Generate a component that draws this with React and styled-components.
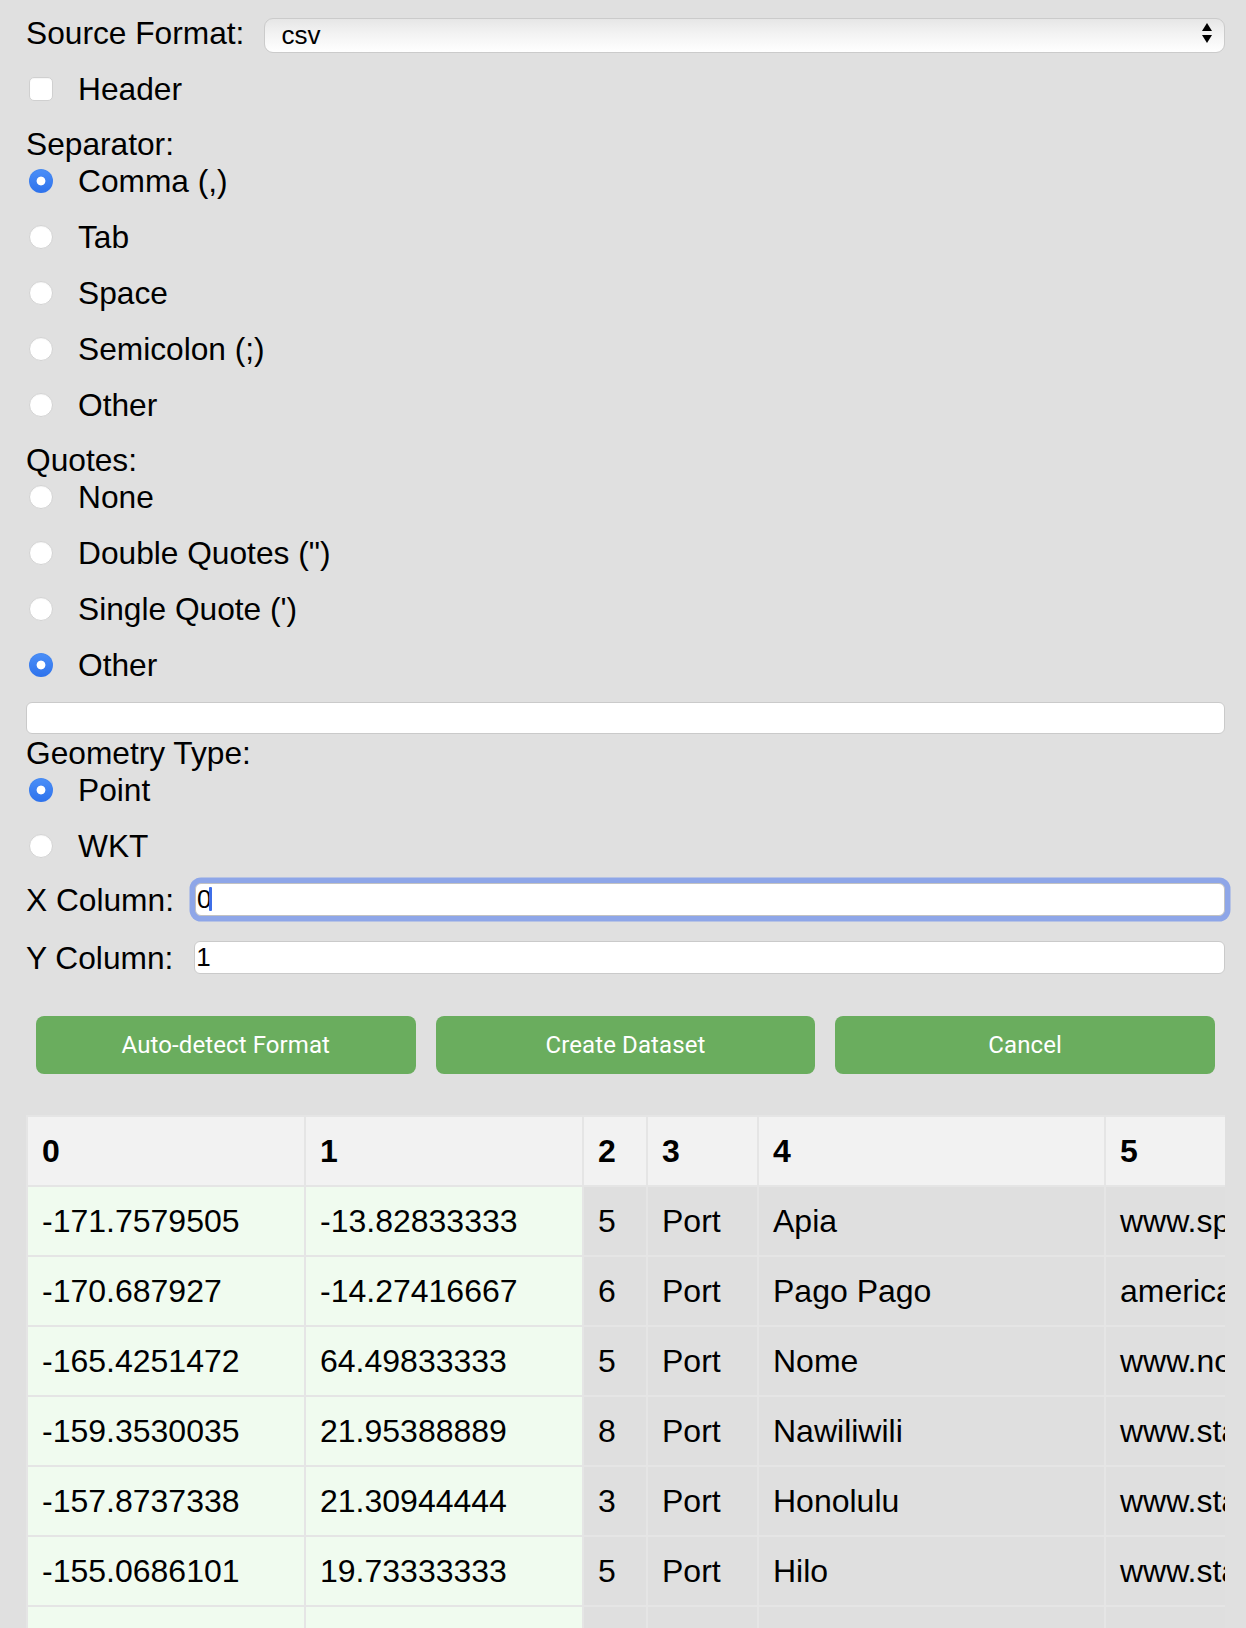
import React from 'react';
import styled, { createGlobalStyle } from 'styled-components';

const Global = createGlobalStyle`
  html, body { margin: 0; padding: 0; background: #e0e0e0; overflow: hidden; }
  body { font-family: "Liberation Sans", Arial, Helvetica, sans-serif; color: #000; }
`;

const Page = styled.div`
  padding: 0 21px 0 26px;
  font-size: 31.7px;
  line-height: 36px;
`;

const FormatRow = styled.div`
  display: flex;
  align-items: center;
  padding-top: 15px;
  height: 35px;
  margin-bottom: 20px;
`;

const FieldLabel = styled.span`
  flex: none;
  margin-right: ${p => p.$gap || 21}px;
  white-space: nowrap;
`;

const SelectWrap = styled.div`
  position: relative;
  flex: 1;
  height: 35px;
`;

const Select = styled.select`
  appearance: none;
  -webkit-appearance: none;
  width: 100%;
  height: 35px;
  box-sizing: border-box;
  border: 1.5px solid #cbcbcb;
  border-radius: 9px;
  background: linear-gradient(to bottom, #e6e6e6 0%, #f3f3f3 45%, #ffffff 100%);
  font-family: "Liberation Sans", Arial, sans-serif;
  font-size: 26px;
  color: #000;
  padding: 0 0 0 16px;
  outline: none;
`;

const SelectArrows = styled.svg`
  position: absolute;
  right: 13px;
  top: 8px;
  width: 10px;
  height: 20px;
  pointer-events: none;
`;

const OptionRow = styled.label`
  display: flex;
  align-items: center;
  height: 38px;
  margin-bottom: 18px;
  white-space: nowrap;
`;

const GroupLabel = styled.div`
  height: 36px;
  line-height: 36px;
  margin-top: ${p => p.$top || 0}px;
`;

const CheckBox = styled.input.attrs({ type: 'checkbox' })`
  appearance: none;
  -webkit-appearance: none;
  flex: none;
  width: 24px;
  height: 24px;
  margin: 0 25px 0 3px;
  box-sizing: border-box;
  background: #fff;
  border: 1px solid #d0d0d0;
  border-radius: 5px;
  box-shadow: inset 0 1px 1px rgba(0, 0, 0, 0.04);
`;

const Radio = styled.input.attrs({ type: 'radio' })`
  appearance: none;
  -webkit-appearance: none;
  flex: none;
  width: 24px;
  height: 24px;
  margin: 0 25px 0 3px;
  box-sizing: border-box;
  border-radius: 50%;
  background: #fff;
  border: 1px solid #d3d3d3;
  box-shadow: inset 0 1px 1px rgba(0, 0, 0, 0.04);
  &:checked {
    border: none;
    background:
      radial-gradient(circle at center, #fff 0, #fff 4px, rgba(255,255,255,0) 4.8px),
      linear-gradient(to bottom, #4b8ff8, #2e72ec);
  }
`;

const TextField = styled.input.attrs({ type: 'text' })`
  display: block;
  box-sizing: border-box;
  width: 100%;
  height: ${p => p.$h || 32}px;
  margin: 0;
  padding: 0 0 0 1px;
  background: #fff;
  border: 1.5px solid ${p => (p.$focused ? '#c2c2c2' : '#cacaca')};
  border-radius: 6px;
  font-family: "Liberation Sans", Arial, sans-serif;
  font-size: 26px;
  color: #000;
  outline: none;
  box-shadow: ${p => (p.$focused ? '0 0 0 5.5px #8ea6e8' : 'none')};
`;

const OtherField = styled.div`
  margin-top: 3px;
`;

const ColumnRow = styled.div`
  display: flex;
  align-items: center;
  height: 33px;
  margin-top: ${p => p.$top || 0}px;
`;

const InputWrap = styled.div`
  position: relative;
  flex: 1;
`;

const Caret = styled.span`
  position: absolute;
  left: 14px;
  top: 4px;
  width: 3px;
  height: 24px;
  background: #3d6ee8;
  border-radius: 1px;
`;

const ButtonRow = styled.div`
  display: flex;
  margin-top: 42px;
`;

const Button = styled.button`
  flex: 1;
  height: 58px;
  margin: 0 10px;
  border: none;
  border-radius: 8px;
  background: #6aad5e;
  color: #fff;
  font-family: Roboto, "Liberation Sans", sans-serif;
  font-size: 24px;
  font-weight: 400;
  letter-spacing: 0.1px;
  cursor: pointer;
`;

const TableWrap = styled.div`
  margin-top: 41px;
  overflow: hidden;
`;

const Table = styled.table`
  table-layout: fixed;
  width: 1480px;
  border-collapse: separate;
  border-spacing: 2px;
  background: #e5e5e5;
  font-size: 32px;
`;

const Col = styled.col`
  width: ${p => p.$w}px;
`;

const Th = styled.th`
  height: 68px;
  padding: 0 14px;
  background: #f2f2f2;
  text-align: left;
  font-weight: bold;
  white-space: nowrap;
  overflow: hidden;
`;

const Td = styled.td`
  height: 68px;
  padding: 0 14px;
  background: ${p => (p.$geo ? '#f0fbef' : '#dfdfdf')};
  white-space: nowrap;
  overflow: hidden;
`;

const columns = [276, 276, 62, 109, 345, 400];

const rows = [
  ['-171.7579505', '-13.82833333', '5', 'Port', 'Apia', 'www.spasifik.ws'],
  ['-170.687927', '-14.27416667', '6', 'Port', 'Pago Pago', 'americansamoa.gov'],
  ['-165.4251472', '64.49833333', '5', 'Port', 'Nome', 'www.nomealaska.org'],
  ['-159.3530035', '21.95388889', '8', 'Port', 'Nawiliwili', 'www.state.hi.us'],
  ['-157.8737338', '21.30944444', '3', 'Port', 'Honolulu', 'www.state.hi.us'],
  ['-155.0686101', '19.73333333', '5', 'Port', 'Hilo', 'www.state.hi.us'],
  ['-156.4666667', '20.89833333', '4', 'Port', 'Kahului', 'www.state.hi.us'],
  ['-150.4400000', '61.23333333', '2', 'Port', 'Anchorage', 'www.portofalaska.com'],
];

const separators = ['Comma (,)', 'Tab', 'Space', 'Semicolon (;)', 'Other'];
const quotes = ['None', 'Double Quotes (")', "Single Quote (')", 'Other'];
const geometries = ['Point', 'WKT'];

function RadioGroup({ name, options, checked }) {
  return options.map(opt => (
    <OptionRow key={opt}>
      <Radio name={name} defaultChecked={opt === checked} />
      {opt}
    </OptionRow>
  ));
}

export default function App() {
  return (
    <>
      <Global />
      <Page>
        <FormatRow>
          <FieldLabel $gap={20}>Source Format:</FieldLabel>
          <SelectWrap>
            <Select defaultValue="csv">
              <option value="csv">csv</option>
              <option value="json">json</option>
            </Select>
            <SelectArrows viewBox="0 0 10 20">
              <path d="M5 0 L10 8 L0 8 Z" fill="#000" />
              <path d="M0 12 L10 12 L5 20 Z" fill="#000" />
            </SelectArrows>
          </SelectWrap>
        </FormatRow>

        <OptionRow>
          <CheckBox />
          Header
        </OptionRow>

        <GroupLabel>Separator:</GroupLabel>
        <RadioGroup name="sep" options={separators} checked="Comma (,)" />

        <GroupLabel>Quotes:</GroupLabel>
        <RadioGroup name="quote" options={quotes} checked="Other" />

        <OtherField>
          <TextField defaultValue="" />
        </OtherField>

        <GroupLabel $top={1}>Geometry Type:</GroupLabel>
        <RadioGroup name="geom" options={geometries} checked="Point" />

        <ColumnRow $top={4}>
          <FieldLabel>X Column:</FieldLabel>
          <InputWrap>
            <TextField $h={33} $focused defaultValue="0" />
            <Caret />
          </InputWrap>
        </ColumnRow>
        <ColumnRow $top={25}>
          <FieldLabel>Y Column:</FieldLabel>
          <InputWrap>
            <TextField $h={33} defaultValue="1" />
          </InputWrap>
        </ColumnRow>

        <ButtonRow>
          <Button>Auto-detect Format</Button>
          <Button>Create Dataset</Button>
          <Button>Cancel</Button>
        </ButtonRow>

        <TableWrap>
          <Table>
            <colgroup>
              {columns.map((w, i) => (
                <Col key={i} $w={w} />
              ))}
            </colgroup>
            <thead>
              <tr>
                {columns.map((_, i) => (
                  <Th key={i}>{i}</Th>
                ))}
              </tr>
            </thead>
            <tbody>
              {rows.map((r, ri) => (
                <tr key={ri}>
                  {r.map((c, ci) => (
                    <Td key={ci} $geo={ci < 2}>
                      {c}
                    </Td>
                  ))}
                </tr>
              ))}
            </tbody>
          </Table>
        </TableWrap>
      </Page>
    </>
  );
}
